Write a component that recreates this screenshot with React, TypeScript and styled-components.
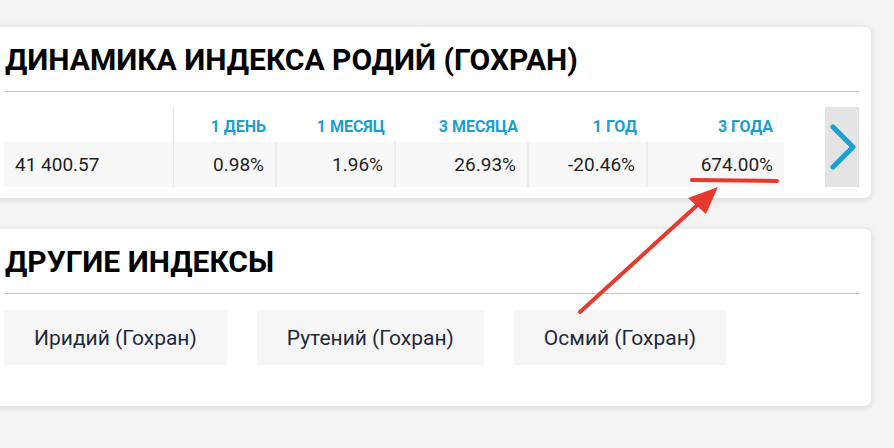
import React from "react";
import styled, { createGlobalStyle } from "styled-components";

const GlobalStyle = createGlobalStyle`
  html, body {
    margin: 0;
    padding: 0;
    background: #f3f3f3;
    font-family: Roboto, "Noto Sans", Arial, sans-serif;
  }
`;

const Page = styled.div`
  position: relative;
  width: 894px;
  height: 448px;
  overflow: hidden;
  padding-top: 27px;
  box-sizing: border-box;
`;

const Column = styled.div`
  display: flex;
  flex-direction: column;
  gap: 31px;
  margin-left: -16px;
  width: 887px;
`;

const Card = styled.section<{ $bottom: number }>`
  background: #fff;
  border-radius: 6px;
  box-shadow: 0 1px 6px rgba(0, 0, 0, 0.12);
  padding: 15px 12px ${(p) => p.$bottom}px 20px;
`;

const Title = styled.h2`
  margin: 0 0 0 0;
  font-size: 30px;
  line-height: 36px;
  font-weight: 700;
  color: #000;
  padding-left: 1px;
  padding-bottom: 13px;
`;

const Rule = styled.div`
  height: 1px;
  background: #fbc93f;
`;

const TableWrap = styled.div`
  display: flex;
  align-items: stretch;
  margin-top: 15px;
`;

const Table = styled.div`
  display: flex;
  flex-direction: column;
  width: 780px;
`;

const Row = styled.div<{ $head?: boolean }>`
  display: flex;
  height: ${(p) => (p.$head ? 35 : 45)}px;
  background: ${(p) => (p.$head ? "transparent" : "#f8f8f8")};
`;

const Cell = styled.div<{ $w: number; $head?: boolean; $first?: boolean; $divider?: boolean }>`
  width: ${(p) => p.$w}px;
  box-sizing: border-box;
  display: flex;
  align-items: center;
  justify-content: ${(p) => (p.$first ? "flex-start" : "flex-end")};
  padding: ${(p) => (p.$first ? "0 0 0 11px" : "0 11px 0 0")};
  padding-top: ${(p) => (p.$head ? "4px" : "0")};
  font-size: ${(p) => (p.$head ? 16 : 19)}px;
  font-weight: ${(p) => (p.$head ? 700 : 400)};
  color: ${(p) => (p.$head ? "#1a9fd1" : "#1e1e1e")};
  border-right: ${(p) =>
    p.$first ? "1px solid #e9e9e9" : p.$divider ? "2px solid #ececec" : "none"};
`;

const NextButton = styled.button`
  margin-left: 41px;
  width: 34px;
  border: none;
  padding: 0;
  background: #e4e4e4;
  display: flex;
  align-items: center;
  justify-content: center;
  cursor: pointer;
`;

const Links = styled.div`
  display: flex;
  gap: 30px;
  margin-top: 16px;
`;

const LinkButton = styled.a`
  display: flex;
  align-items: center;
  justify-content: center;
  height: 55px;
  padding: 0 30px;
  background: #f6f6f6;
  color: #1f2a3c;
  font-size: 21px;
  text-decoration: none;
`;

const Annotation = styled.svg`
  position: absolute;
  left: 0;
  top: 0;
  pointer-events: none;
`;

const columns = [
  { label: "", value: "41 400.57", w: 170 },
  { label: "1 ДЕНЬ", value: "0.98%", w: 103 },
  { label: "1 МЕСЯЦ", value: "1.96%", w: 119 },
  { label: "3 МЕСЯЦА", value: "26.93%", w: 133 },
  { label: "1 ГОД", value: "-20.46%", w: 119 },
  { label: "3 ГОДА", value: "674.00%", w: 136 },
];

const others = ["Иридий (Гохран)", "Рутений (Гохран)", "Осмий (Гохран)"];

export default function App() {
  return (
    <Page>
      <GlobalStyle />
      <Column>
        <Card $bottom={11}>
          <Title>ДИНАМИКА ИНДЕКСА РОДИЙ (ГОХРАН)</Title>
          <Rule />
          <TableWrap>
            <Table>
              <Row $head>
                {columns.map((c, i) => (
                  <Cell key={i} $w={c.w} $head $first={i === 0}>
                    {c.label}
                  </Cell>
                ))}
              </Row>
              <Row>
                {columns.map((c, i) => (
                  <Cell
                    key={i}
                    $w={c.w}
                    $first={i === 0}
                    $divider={i > 0 && i < columns.length - 1}
                  >
                    {c.value}
                  </Cell>
                ))}
              </Row>
            </Table>
            <NextButton aria-label="next">
              <svg width="30" height="46" viewBox="0 0 30 46">
                <path
                  d="M6 3 L26 23 L6 43"
                  fill="none"
                  stroke="#1a9fd1"
                  strokeWidth="5"
                  strokeLinecap="round"
                  strokeLinejoin="round"
                />
              </svg>
            </NextButton>
          </TableWrap>
        </Card>
        <Card $bottom={41}>
          <Title>ДРУГИЕ ИНДЕКСЫ</Title>
          <Rule />
          <Links>
            {others.map((o) => (
              <LinkButton key={o} href="#">
                {o}
              </LinkButton>
            ))}
          </Links>
        </Card>
      </Column>
      <Annotation width="894" height="448" viewBox="0 0 894 448">
        <line x1="692" y1="180" x2="777" y2="181" stroke="#e63a2e" strokeWidth="4" strokeLinecap="round" />
        <line x1="580" y1="312" x2="704" y2="199" stroke="#e63a2e" strokeWidth="4" strokeLinecap="round" />
        <polygon points="718,187 688,198 706,214" fill="#e63a2e" />
      </Annotation>
    </Page>
  );
}
